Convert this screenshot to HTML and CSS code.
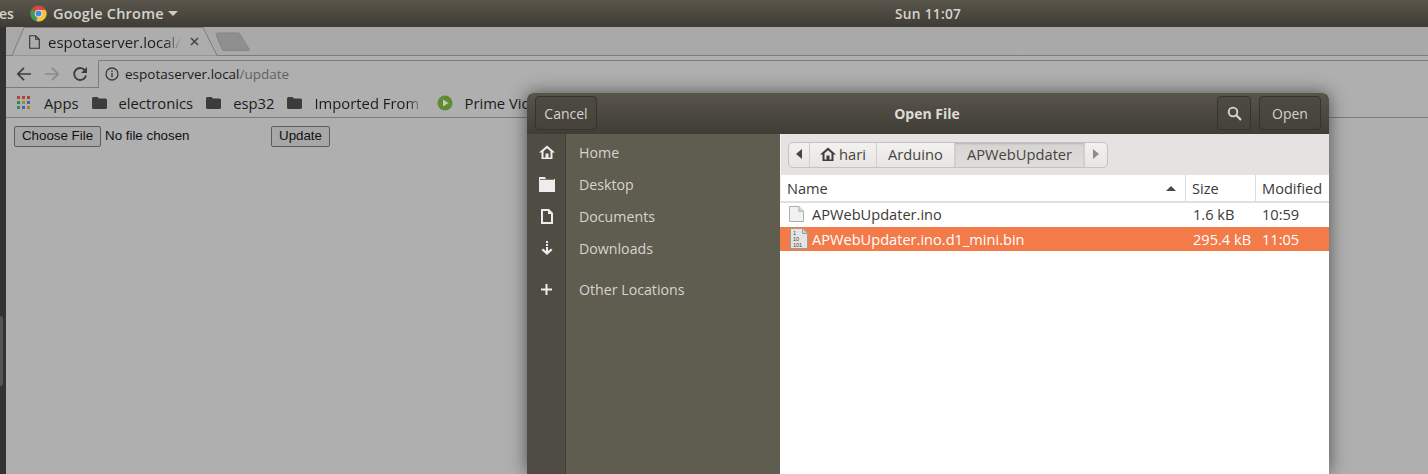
FILE: index.html
```html
<!DOCTYPE html>
<html lang="en">
<head>
<meta charset="utf-8">
<title>Open File</title>
<link rel="stylesheet" href="styles.css">
</head>
<body>
<header class="panel">
  <span class="panel-clip">es</span>
  <svg class="chrome-logo" width="17" height="17" viewBox="0 0 18 18"><circle cx="9" cy="9" r="8.5" fill="#d9483b"/><path d="M9 9 1.6 4.8A8.5 8.5 0 0 0 7 17.3z" fill="#3c9c52"/><path d="M9 5.2h7.6A8.5 8.5 0 0 1 7 17.3z" fill="#f4c63d"/><circle cx="9" cy="9" r="4" fill="#eee"/><circle cx="9" cy="9" r="3.1" fill="#4a86e8"/></svg>
  <span class="panel-app">Google Chrome</span>
  <svg class="panel-caret" width="10" height="5" viewBox="0 0 10 5"><path d="M0 0h10L5 5z" fill="#cfcdc8"/></svg>
  <span class="panel-clock">Sun 11:07</span>
</header>
<div class="desktop">
  <div class="launcher"><div class="launcher-thumb"></div></div>
  <div class="browser">
    <div class="tabstrip">
      <div class="tab">
        <svg class="tab-shape" width="208" height="29" viewBox="0 0 208 29"><path d="M0 28.5 12 .5h179l14 28" fill="#adadad" stroke="#7c7c7c"/></svg>
        <svg class="tab-page" width="11" height="14" viewBox="0 0 11 14"><path d="M.7.7h6l3.6 3.6v9H.7zM6.7.7v3.6h3.6" fill="none" stroke="#333" stroke-width="1.1"/></svg>
        <span class="tab-title">espotaserver.local/update</span>
        <svg class="tab-close" width="9" height="9" viewBox="0 0 9 9"><path d="M1 1l7 7M8 1 1 8" stroke="#444" stroke-width="1.5"/></svg>
      </div>
      <svg class="newtab" width="36" height="20" viewBox="0 0 36 20"><path d="M1 2.5 Q1 1 3 1h20q1.500 0 2 1.500L34 17q.6 1.500-1 1.500H9q-1.500 0-2-1.500z" fill="#8f8f8f" stroke="#858585"/></svg>
    </div>
    <div class="toolbar">
      <svg class="nav-icon" width="16" height="16" viewBox="0 0 16 16"><path d="M15 8H2M8 1.800 1.800 8 8 14.200" fill="none" stroke="#3d3d3d" stroke-width="1.700"/></svg>
      <svg class="nav-icon" width="16" height="16" viewBox="0 0 16 16"><path d="M1 8h13M8 1.800 14.200 8 8 14.200" fill="none" stroke="#8a8a8a" stroke-width="1.700"/></svg>
      <svg class="nav-icon" width="16" height="16" viewBox="0 0 16 16"><path d="M13.400 5A6 6 0 1 0 14 9.500" fill="none" stroke="#3d3d3d" stroke-width="1.800"/><path d="M15 1v6H9z" fill="#3d3d3d"/></svg>
      <div class="omnibox">
        <svg width="14" height="14" viewBox="0 0 14 14"><circle cx="7" cy="7" r="6" fill="none" stroke="#3c3c3c" stroke-width="1.300"/><path d="M7 6v4.300M7 3.500v1.500" stroke="#3c3c3c" stroke-width="1.400"/></svg>
        <span class="url"><span class="url-host">espotaserver.local</span>/update</span>
      </div>
    </div>
    <div class="bookmarks">
      <span class="bm bm-apps">
        <svg width="13" height="13" viewBox="0 0 13 13"><rect width="3" height="3" fill="#b0433a"/><rect x="5" width="3" height="3" fill="#b0433a"/><rect x="10" width="3" height="3" fill="#b0433a"/><rect y="5" width="3" height="3" fill="#35865a"/><rect x="5" y="5" width="3" height="3" fill="#a88a2c"/><rect x="10" y="5" width="3" height="3" fill="#3a6ba8"/><rect y="10" width="3" height="3" fill="#35865a"/><rect x="5" y="10" width="3" height="3" fill="#3a6ba8"/><rect x="10" y="10" width="3" height="3" fill="#b07c20"/></svg>
        Apps</span>
      <span class="bm"><svg class="folder" width="15" height="12" viewBox="0 0 15 12"><path d="M0 1.500Q0 0 1.500 0h4l1.500 1.500h6.500Q15 1.500 15 3v7.500q0 1.500-1.500 1.500h-12Q0 12 0 10.500z" fill="#3c3c3c"/></svg>electronics</span>
      <span class="bm"><svg class="folder" width="15" height="12" viewBox="0 0 15 12"><path d="M0 1.500Q0 0 1.500 0h4l1.500 1.500h6.500Q15 1.500 15 3v7.500q0 1.500-1.500 1.500h-12Q0 12 0 10.500z" fill="#3c3c3c"/></svg>esp32</span>
      <span class="bm"><svg class="folder" width="15" height="12" viewBox="0 0 15 12"><path d="M0 1.500Q0 0 1.500 0h4l1.500 1.500h6.500Q15 1.500 15 3v7.500q0 1.500-1.500 1.500h-12Q0 12 0 10.500z" fill="#3c3c3c"/></svg><span class="bm-fade">Imported From Firefox</span></span>
      <span class="bm"><svg class="prime" width="16" height="16" viewBox="0 0 16 16"><circle cx="8" cy="8" r="7.500" fill="#5e8c34"/><path d="M6 4.500v7l5.500-3.500z" fill="#c9c9a8"/></svg>Prime Video</span>
    </div>
    <form class="page">
      <input class="file-input" type="file">
      <input class="submit" type="submit" value="Update">
    </form>
  </div>
</div>

<section class="dialog">
  <div class="dlg-head">
    <button class="dlg-btn dlg-cancel" type="button">Cancel</button>
    <span class="dlg-title">Open File</span>
    <button class="dlg-btn dlg-search" type="button" aria-label="Search">
      <svg width="15" height="15" viewBox="0 0 15 15"><circle cx="6" cy="6" r="4.300" fill="none" stroke="#dbd9d3" stroke-width="1.800"/><path d="M9.300 9.300 14 14" stroke="#dbd9d3" stroke-width="2.200"/></svg>
    </button>
    <button class="dlg-btn dlg-open" type="button">Open</button>
  </div>
  <div class="dlg-body">
    <aside class="side">
      <ul class="places">
        <li class="place"><span class="place-icon"><svg width="16" height="14" viewBox="0 0 16 14"><path d="M8 .5 0 7.500h2.500V14h11V7.500H16z" fill="#eeeded"/><path d="M8 3.200 4.500 6.300V12.500H6.500V8.500h3v4H11.500V6.300z" fill="#4e4c43"/></svg></span><span class="place-name">Home</span></li>
        <li class="place"><span class="place-icon"><svg width="16" height="15" viewBox="0 0 16 15"><path d="M0 0h6l1 2h9v1H1v12H0z" fill="#eeeded"/><path d="M3 4h13v11H3z" fill="#eeeded"/><path d="M0 3h16v12H0z" fill="#eeeded"/><path d="M1 2h14v1H1z" fill="#7a786e"/></svg></span><span class="place-name">Desktop</span></li>
        <li class="place"><span class="place-icon"><svg width="12" height="15" viewBox="0 0 12 15"><path d="M0 0h8l4 4v11H0z" fill="#eeeded"/><path d="M2 2h5v3h3v8H2z" fill="#4e4c43"/></svg></span><span class="place-name">Documents</span></li>
        <li class="place"><span class="place-icon"><svg width="12" height="15" viewBox="0 0 12 15"><path d="M5 0h2v2H5zM5 3h2v2H5zM5 6h2v4l3-2.500 1.500 1.500L6 14 .500 9 2 7.500 5 10z" fill="#eeeded"/></svg></span><span class="place-name">Downloads</span></li>
        <li class="place place-other"><span class="place-icon"><svg width="11" height="11" viewBox="0 0 11 11"><path d="M4.500 0h2v4.500H11v2H6.500V11h-2V6.500H0v-2h4.500z" fill="#eeeded"/></svg></span><span class="place-name">Other Locations</span></li>
      </ul>
    </aside>
    <div class="main">
      <div class="pathbar-wrap">
        <nav class="pathbar">
          <span class="crumb crumb-arrow"><svg width="6" height="10" viewBox="0 0 6 10"><path d="M6 0v10L0 5z" fill="#45443f"/></svg></span>
          <span class="crumb crumb-hari"><svg width="16" height="14" viewBox="0 0 16 14"><path d="M8 .5 0 7.500h2.500V14h11V7.500H16z" fill="#3e3d39"/><path d="M8 3.200 4.500 6.300V12.500H6.500V8.500h3v4H11.500V6.300z" fill="#e9e8e6"/></svg>hari</span>
          <span class="crumb crumb-arduino">Arduino</span>
          <span class="crumb crumb-active">APWebUpdater</span>
          <span class="crumb crumb-next"><svg width="6" height="10" viewBox="0 0 6 10"><path d="M0 0v10l6-5z" fill="#8e8d88"/></svg></span>
        </nav>
      </div>
      <div class="list">
        <div class="list-head">
          <span class="col col-name">Name<svg class="sort" width="10" height="5" viewBox="0 0 10 5"><path d="M0 5h10L5 0z" fill="#4a4945"/></svg></span>
          <span class="col col-size">Size</span>
          <span class="col col-mod">Modified</span>
        </div>
        <div class="row">
          <span class="cell cell-name"><svg width="15" height="16" viewBox="0 0 16 17"><path d="M.5.500h10l5 5v11H.500z" fill="#f1f1f0" stroke="#a9a9a6"/><path d="M10.500.500v5h5" fill="#dededc" stroke="#a9a9a6"/></svg>APWebUpdater.ino</span>
          <span class="cell cell-size">1.6 kB</span>
          <span class="cell cell-mod">10:59</span>
        </div>
        <div class="row row-selected">
          <span class="cell cell-name"><svg class="binary" width="18" height="21" viewBox="0 0 18 21"><path d="M.5.500h12l5 5v15H.500z" fill="#e4e4e2" stroke="#9c9c98"/><path d="M12.500.500v5h5" fill="#cfcfcc" stroke="#9c9c98"/><text class="binary-digits" x="3" y="7">1</text><text class="binary-digits" x="3" y="13">10</text><text class="binary-digits" x="3" y="19">101</text></svg>APWebUpdater.ino.d1_mini.bin</span>
          <span class="cell cell-size">295.4 kB</span>
          <span class="cell cell-mod">11:05</span>
        </div>
      </div>
    </div>
  </div>
</section>
</body>
</html>
```
FILE: styles.css
```css
* { box-sizing: border-box; }
html, body { margin: 0; padding: 0; height: 474px; overflow: hidden; }
body {
  display: flex;
  flex-direction: column;
  font-family: "Open Sans", "Noto Sans", sans-serif;
  background: #afafaf;
  position: relative;
}
svg { display: block; flex: none; }

/* top panel */
.panel {
  height: 27px;
  flex: none;
  display: flex;
  align-items: center;
  background: linear-gradient(#5a564c, #3e3c35);
  color: #d6d4cf;
  font-size: 14px;
  font-weight: 600;
  white-space: nowrap;
}
.panel-clip { width: 31px; overflow: hidden; margin-left: -1px; flex: none; }
.chrome-logo { margin-right: 6px; }
.panel-app { width: 110px; font-size: 14.500px; letter-spacing: .2px; }
.panel-caret { margin-left: 5px; }
.panel-clock { margin-left: 717px; font-size: 13.700px; letter-spacing: .3px; }

/* browser */
.desktop { flex: 1; display: flex; min-height: 0; }
.launcher { width: 6px; flex: none; background: #333335; padding-top: 289px; }
.launcher-thumb { width: 3px; height: 70px; background: #555556; border-radius: 0 3px 3px 0; }
.browser { flex: 1; min-width: 0; display: flex; flex-direction: column; background: #afafaf; }

.tabstrip {
  height: 29px;
  flex: none;
  display: flex;
  align-items: flex-end;
  background: linear-gradient(#a8a8a8, #a9a9a9);
  border-bottom: 1px solid #7c7c7c;
  padding-left: 6px;
  color: #1c1c1c;
}
.tab {
  position: relative;
  width: 205px;
  height: 29px;
  margin-bottom: -1px;
  display: flex;
  align-items: center;
  padding: 0 0 0 17px;
}
.tab-shape { position: absolute; left: 0; top: 0; }
.tab-page, .tab-title, .tab-close { position: relative; }
.tab-title {
  width: 133px;
  margin-left: 8px;
  font-size: 15px;
  overflow: hidden;
  white-space: nowrap;
  -webkit-mask-image: linear-gradient(90deg, #000 88%, transparent);
  mask-image: linear-gradient(90deg, #000 88%, transparent);
}
.tab-close { margin-left: 9px; }
.newtab { margin: 0 0 3px -2px; }

.toolbar {
  height: 32px;
  flex: none;
  display: flex;
  align-items: center;
  padding: 4px 0 0 10px;
  background: #afafaf;
  border-bottom: 1px solid #7c7c7c;
}
.nav-icon { margin-right: 12px; }
.omnibox {
  flex: 1;
  align-self: stretch;
  margin: 0 0 -1px -2px;
  display: flex;
  align-items: center;
  gap: 6px;
  padding: 0 0 2px 6px;
  border: 1px solid #7c7c7c;
  border-right: 0;
  border-bottom: 0;
  border-radius: 2px 0 0 0;
  background: #afafaf;
}
.url { font-size: 13.500px; color: #626262; white-space: nowrap; }
.url-host { color: #1c1c1c; }

.bookmarks {
  height: 30px;
  flex: none;
  display: flex;
  align-items: center;
  padding-left: 11px;
  gap: 13px;
  font-size: 14.800px;
  color: #1c1c1c;
  white-space: nowrap;
  border-bottom: 1px solid #7c7c7c;
  background: #afafaf;
}
.bm { display: flex; align-items: center; }
.bm-apps svg { margin-right: 14px; }
.folder { margin-right: 12px; }
.prime { margin-right: 11px; }
.bm-fade {
  width: 110px;
  overflow: hidden;
  -webkit-mask-image: linear-gradient(90deg, #000 85%, transparent);
  mask-image: linear-gradient(90deg, #000 85%, transparent);
}

.page { flex: 1; padding: 8px 8px; display: flex; align-items: flex-start; gap: 0; }
.file-input, .submit {
  font-family: "Liberation Sans", Arial, sans-serif;
  font-size: 13.333px;
  color: #111;
}
.file-input { width: 257px; margin: 0; }
.file-input::file-selector-button {
  font: inherit;
  height: 21px;
  width: 87px;
  padding: 0 0 2px;
  margin-right: 4px;
  background: #a7a7a7;
  border: 1px solid #5c5c5c;
  border-radius: 2px;
  color: #111;
}
.submit {
  height: 21px;
  width: 59px;
  padding: 0 0 2px;
  background: #a7a7a7;
  border: 1px solid #5c5c5c;
  border-radius: 2px;
}

/* dialog */
.dialog {
  position: absolute;
  left: 527px;
  top: 93px;
  bottom: 0;
  width: 802px;
  display: flex;
  flex-direction: column;
  border-radius: 6px 6px 0 0;
  background: #fff;
  box-shadow: 0 0 18px rgba(0, 0, 0, .55);
}
.dlg-head {
  height: 41px;
  flex: none;
  display: flex;
  align-items: center;
  padding: 0 8px;
  border-radius: 6px 6px 0 0;
  background: linear-gradient(#59554b, #3f3d36);
  color: #dedcd6;
}
.dlg-btn {
  height: 34px;
  margin-top: -1px;
  background: linear-gradient(#4d4a41, #45433b);
  border: 1px solid #35332d;
  border-radius: 4px;
  color: #d4d2cc;
  font-family: inherit;
  font-size: 14px;
  padding: 0;
  display: flex;
  align-items: center;
  justify-content: center;
}
.dlg-cancel { width: 62px; }
.dlg-title { flex: 1; text-align: center; font-size: 14px; font-weight: 700; padding-left: 40px; }
.dlg-search { width: 34px; margin-right: 8px; }
.dlg-open { width: 62px; }

.dlg-body { flex: 1; display: flex; min-height: 0; }
.side {
  width: 253px;
  flex: none;
  background: linear-gradient(90deg, #4e4c43 38px, #3f3d36 38px, #3f3d36 39px, #5f5c50 39px);
}
.places { list-style: none; margin: 0; padding: 2px 0 0; }
.place {
  height: 32px;
  display: flex;
  align-items: center;
  color: #d6d4ce;
  font-size: 14.200px;
}
.place-other { margin-top: 9px; }
.place-icon { width: 39px; display: flex; justify-content: center; flex: none; }
.place-name { margin-left: 13px; }

.main { flex: 1; min-width: 0; display: flex; flex-direction: column; background: #fff; }
.pathbar-wrap {
  height: 41px;
  flex: none;
  padding: 8px 0 0 7px;
  background: #e4e3e1;
  border-left: 1px solid #f2f2f0;
}
.pathbar {
  display: inline-flex;
  height: 26px;
  border: 1px solid #c4c3bf;
  border-radius: 5px;
  background: linear-gradient(#f2f1f0, #e6e5e3);
  color: #45443f;
  font-size: 14.700px;
}
.crumb {
  display: flex;
  align-items: center;
  justify-content: center;
  border-right: 1px solid #cfcecb;
  gap: 3px;
  padding-bottom: 2px;
}
.crumb-arrow { width: 21px; }
.crumb-hari { width: 67px; }
.crumb-arduino { width: 78px; }
.crumb-active { width: 130px; background: linear-gradient(#d6d5d2, #dedddb); box-shadow: inset 0 1px 2px rgba(0,0,0,.15); }
.crumb-next { width: 22px; border-right: 0; }

.list { flex: 1; color: #3b3a36; font-size: 14.600px; }
.list-head {
  height: 28px;
  display: flex;
  align-items: center;
  border-bottom: 2px solid #e1e0de;
  border-left: 1px solid #f0f0ee;
}
.col { height: 26px; display: flex; align-items: center; padding-left: 6px; }
.col-name { width: 405px; padding-right: 9px; justify-content: space-between; border-right: 1px solid #dddcda; }
.col-size { width: 70px; border-right: 1px solid #dddcda; }
.col-mod { flex: 1; white-space: nowrap; overflow: hidden; }
.row { height: 24px; display: flex; align-items: center; padding-bottom: 2px; }
.row-selected { background: #f37a49; color: #fff; padding-bottom: 1px; }
.cell-name { width: 406px; padding-left: 9px; display: flex; align-items: center; gap: 8px; }
.row-selected .cell-name { padding-left: 10px; gap: 4px; }
.cell-size { width: 69px; padding-left: 7px; white-space: nowrap; }
.cell-mod { flex: 1; padding-left: 7px; }
.binary-digits { font-family: "Liberation Sans", Arial, sans-serif; font-size: 5.500px; fill: #444; }
```
